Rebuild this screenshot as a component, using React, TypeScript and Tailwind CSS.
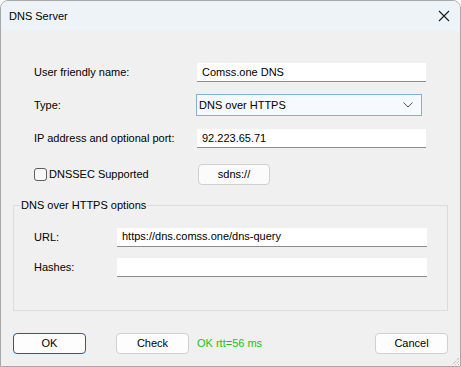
import React from "react";

const font = { fontFamily: '"Segoe UI", "Liberation Sans", Arial, sans-serif' };

type FieldProps = { value?: string; width: string };

const TextBox = ({ value, width }: FieldProps) => (
  <div
    className={`h-[19px] ${width} bg-white border-b border-[#8c8c8c] flex items-center pl-[5px] text-[11px] text-black`}
  >
    {value}
  </div>
);

const Button = ({ label, primary }: { label: string; primary?: boolean }) => (
  <div
    className={`w-[73px] h-[21px] rounded-[4px] bg-[#fdfdfd] flex items-center justify-center text-[11px] text-black ${
      primary ? "border border-[#0067c0]" : "border border-[#d0d0d0]"
    }`}
  >
    {label}
  </div>
);

export default function App() {
  return (
    <div
      className="w-[461px] h-[367px] bg-[#f0f0f0] border border-[#a8a8a8] rounded-t-[8px] overflow-hidden flex flex-col relative"
      style={font}
    >
      {/* title bar */}
      <div className="h-[30px] bg-[#eef3f8] flex items-center justify-between pl-[8px] pr-[10px]">
        <span className="text-[11px] text-black">DNS Server</span>
        <svg width="12" height="12" viewBox="0 0 12 12">
          <path d="M1 1 L11 11 M11 1 L1 11" stroke="#1a1a1a" strokeWidth="1.1" />
        </svg>
      </div>

      <div className="flex flex-col pl-[33px] pt-[32px] text-[11px] text-black">
        <div className="flex items-center h-[19px]">
          <span className="w-[163px]">User friendly name:</span>
          <TextBox value="Comss.one DNS" width="w-[229px]" />
        </div>

        <div className="flex items-center h-[22px] mt-[12px]">
          <span className="w-[162px]">Type:</span>
          <div className="h-[22px] w-[226px] bg-[#f6f9fd] border border-[#84aede] flex items-center justify-between pl-[2px] pr-[8px]">
            <span>DNS over HTTPS</span>
            <svg width="10" height="6" viewBox="0 0 10 6">
              <path d="M0.5 0.5 L5 5 L9.5 0.5" stroke="#555" strokeWidth="1" fill="none" />
            </svg>
          </div>
        </div>

        <div className="flex items-center h-[19px] mt-[13px]">
          <span className="w-[163px]">IP address and optional port:</span>
          <TextBox value="92.223.65.71" width="w-[229px]" />
        </div>

        <div className="flex items-center h-[21px] mt-[16px]">
          <div className="w-[164px] flex items-center">
            <div className="w-[13px] h-[13px] rounded-[3px] border border-[#5e5e5e] bg-[#f8f8f8]" />
            <span className="ml-[2px]">DNSSEC Supported</span>
          </div>
          <div className="w-[72px] h-[21px] rounded-[4px] bg-[#fbfbfb] border border-[#d0d0d0] flex items-center justify-center">
            sdns://
          </div>
        </div>
      </div>

      <fieldset className="mx-[12px] mt-[12px] h-[114px] border border-[#dcdcdc] text-[11px] text-black">
        <legend className="ml-[6px] px-[1px]">DNS over HTTPS options</legend>
        <div className="flex flex-col px-[20px]">
          <div className="flex items-center h-[19px] mt-[14px]">
            <span className="w-[83px]">URL:</span>
            <TextBox value="https://dns.comss.one/dns-query" width="w-[310px]" />
          </div>
          <div className="flex items-center h-[19px] mt-[11px]">
            <span className="w-[83px]">Hashes:</span>
            <TextBox width="w-[310px]" />
          </div>
        </div>
      </fieldset>

      <div className="flex items-center pl-[12px] pr-[12px] mt-[22px] text-[11px]">
        <Button label="OK" primary />
        <div className="ml-[30px]">
          <Button label="Check" />
        </div>
        <span className="ml-[8px] text-[#16c60c]">OK rtt=56 ms</span>
        <div className="ml-auto">
          <Button label="Cancel" />
        </div>
      </div>

      <svg width="10" height="10" viewBox="0 0 10 10" className="absolute right-[0px] bottom-[0px]">
        <path d="M9 2 L2 9 M9 5 L5 9 M9 8 L8 9" stroke="#a0a0a0" strokeWidth="1" strokeDasharray="1 1" />
      </svg>
    </div>
  );
}
